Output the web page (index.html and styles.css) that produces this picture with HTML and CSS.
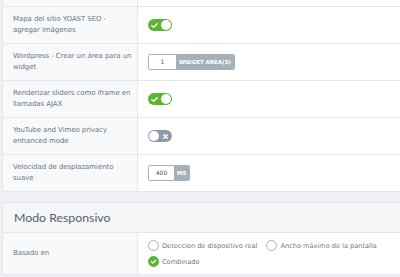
FILE: index.html
```html
<!DOCTYPE html>
<html lang="es">
<head>
  <meta charset="UTF-8">
  <meta name="viewport" content="width=device-width, initial-scale=1.0">
  <title>Opciones</title>
  <link rel="stylesheet" href="styles.css">
</head>
<body>

  <!-- Opciones generales -->
  <div class="panel panel-top">
    <div class="row row-cut">
      <div class="label"></div>
      <div class="field"></div>
    </div>

    <div class="row">
      <div class="label">Mapa del sitio YOAST SEO -<br>agregar imágenes</div>
      <div class="field">
        <span class="toggle on">
          <svg class="icon-check" viewBox="0 0 10 10"><path d="M2 5.2 L4 7 L8 3" /></svg>
          <span class="knob"></span>
        </span>
      </div>
    </div>

    <div class="row">
      <div class="label">Wordpress - Crear un área para un<br>widget</div>
      <div class="field">
        <span class="addon-input">
          <span class="value wide">1</span>
          <span class="unit">WIDGET AREA(S)</span>
        </span>
      </div>
    </div>

    <div class="row">
      <div class="label">Renderizar sliders como iframe en<br>llamadas AJAX</div>
      <div class="field">
        <span class="toggle on">
          <svg class="icon-check" viewBox="0 0 10 10"><path d="M2 5.2 L4 7 L8 3" /></svg>
          <span class="knob"></span>
        </span>
      </div>
    </div>

    <div class="row">
      <div class="label">YouTube and Vimeo privacy<br>enhanced mode</div>
      <div class="field">
        <span class="toggle off">
          <span class="knob"></span>
          <svg class="icon-x" viewBox="0 0 10 10"><path d="M3 3 L7 7 M7 3 L3 7" /></svg>
        </span>
      </div>
    </div>

    <div class="row">
      <div class="label">Velocidad de desplazamiento<br>suave</div>
      <div class="field">
        <span class="addon-input">
          <span class="value">400</span>
          <span class="unit">MS</span>
        </span>
      </div>
    </div>
  </div>

  <!-- Modo responsivo -->
  <div class="panel panel-second">
    <div class="panel-head">Modo Responsivo</div>
    <div class="row row-tall">
      <div class="label">Basado en</div>
      <div class="field">
        <div class="radios">
          <span class="radio"><span class="circle"></span>Deteccion de dispositivo real</span>
          <span class="radio"><span class="circle"></span>Ancho máximo de la pantalla</span>
          <span class="radio checked">
            <span class="circle">
              <svg viewBox="0 0 10 10"><path d="M2.6 5.2 L4.3 6.8 L7.4 3.6" /></svg>
            </span>Combinado
          </span>
        </div>
      </div>
    </div>
  </div>

</body>
</html>
```

FILE: styles.css
```css
body {
  margin: 0;
  padding: 0 0 0 2px;
  background: #eef0f3;
  font-family: "DejaVu Sans", sans-serif;
  overflow: hidden;
}

.panel {
  background: #fff;
  border: 1px solid #e3e6ea;
  margin-right: -10px;
}

.panel-top {
  margin-top: -31px;
}

.panel-second {
  margin-top: 10px;
}

.row {
  display: grid;
  grid-template-columns: 135px 1fr;
  border-bottom: 1px solid #e6e9ec;
  min-height: 36px;
}

.row:last-child {
  border-bottom: none;
}

.row-tall {
  min-height: 41px;
}

.label {
  background: #f8f9fb;
  border-right: 1px solid #e6e9ec;
  padding: 0 1px 0 10px;
  display: flex;
  align-items: center;
  font-size: 7px;
  line-height: 11px;
  letter-spacing: -0.08px;
  white-space: nowrap;
  color: #6b7785;
}

.field {
  display: flex;
  align-items: center;
  padding-left: 10px;
}

/* interrupteur */
.toggle {
  display: inline-flex;
  align-items: center;
  justify-content: space-between;
  width: 24px;
  height: 12px;
  border-radius: 6px;
  box-sizing: border-box;
  padding: 0 1px;
}

.toggle.on {
  background: #5cb531;
}

.toggle.off {
  background: #8e9ba6;
}

.knob {
  width: 10px;
  height: 10px;
  border-radius: 50%;
  background: #fff;
}

.toggle svg {
  width: 9px;
  height: 9px;
  fill: none;
  stroke: #fff;
  stroke-width: 1.6;
  stroke-linecap: round;
  stroke-linejoin: round;
}

.icon-check {
  margin-left: 1px;
}

.icon-x {
  margin-right: 1px;
}

/* champ avec unité */
.addon-input {
  display: inline-flex;
  height: 14px;
  border: 1px solid #a6b0b8;
  border-radius: 2px;
  overflow: hidden;
}

.addon-input .value {
  width: 25px;
  background: #fff;
  font-size: 6px;
  line-height: 14px;
  text-align: center;
  color: #555;
}

.addon-input .value.wide {
  width: 27px;
}

.addon-input .unit {
  background: #a6b0b8;
  color: #fff;
  font-size: 5.5px;
  font-weight: bold;
  line-height: 14px;
  padding: 0 3px;
}

/* en-tête de section */
.panel-head {
  background: #f4f6f8;
  border-bottom: 1px solid #e3e6ea;
  height: 29px;
  line-height: 30px;
  padding-left: 11px;
  font-family: Lato, sans-serif;
  font-size: 12.3px;
  color: #555e68;
}

/* boutons radio */
.radios {
  display: flex;
  flex-wrap: wrap;
  row-gap: 5px;
  column-gap: 9px;
  width: 250px;
}

.radio {
  display: inline-flex;
  align-items: center;
  font-size: 6.6px;
  color: #6b7785;
}

.radio .circle {
  width: 9px;
  height: 9px;
  border: 1px solid #a8b1b9;
  border-radius: 50%;
  margin-right: 3px;
  display: inline-flex;
  align-items: center;
  justify-content: center;
}

.radio.checked .circle {
  background: #5cb531;
  border-color: #5cb531;
}

.radio svg {
  width: 9px;
  height: 9px;
  fill: none;
  stroke: #fff;
  stroke-width: 1.5;
  stroke-linecap: round;
  stroke-linejoin: round;
}
```
